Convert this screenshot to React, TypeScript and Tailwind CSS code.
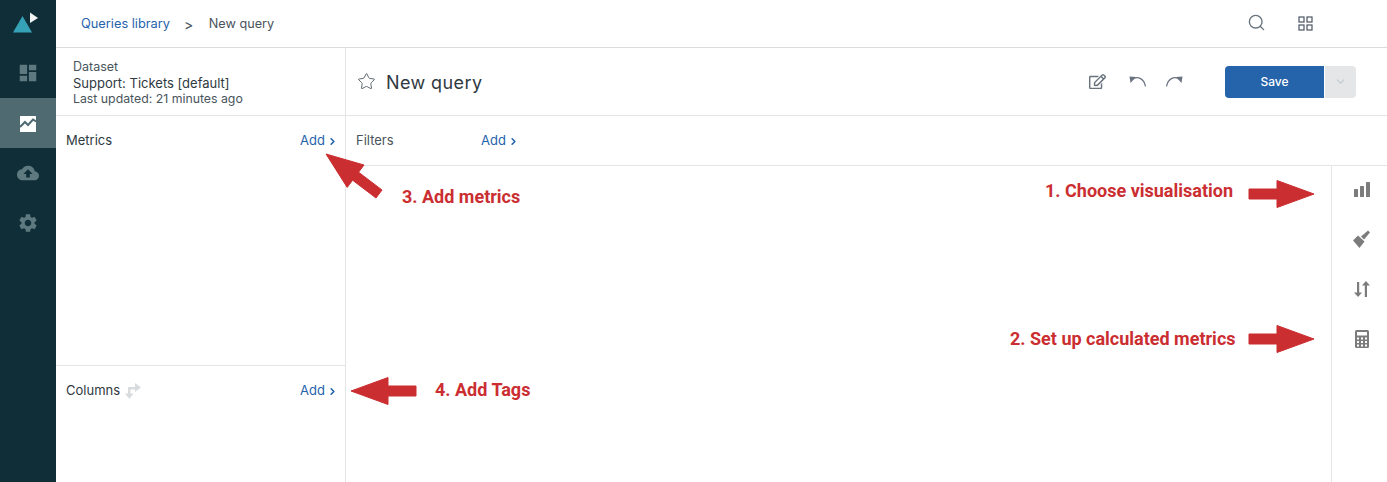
import { FaRegEdit } from "react-icons/fa";
import { MdCloudUpload, MdDashboard, MdSettings } from "react-icons/md";
import { ChevronDown, ChevronRight, Search, Star } from "lucide-react";

function AddLink() {
  return (
    <span className="flex items-center gap-[2px] text-[13px] text-[#2563ab]">
      Add
      <ChevronRight size={11} strokeWidth={3.500} className="mt-px" />
    </span>
  );
}

function Logo() {
  return (
    <svg width="26" height="24" viewBox="0 0 26 24">
      <path d="M9.500 4L19 20.500H0z" fill="#36a2b8" />
      <path d="M17 0.500L25 6L17 11z" fill="#f2f5f5" />
    </svg>
  );
}

function TrendIcon() {
  return (
    <svg width="16" height="16" viewBox="0 0 16 16">
      <rect width="16" height="16" rx="0.500" fill="#fff" />
      <path d="M0 11L5 6L8 9L13 3.500L16 5.500" fill="none" stroke="#4f6b71" strokeWidth="2" />
    </svg>
  );
}

function GridIcon() {
  return (
    <svg width="15" height="15" viewBox="0 0 15 15" fill="none" stroke="#4b5563" strokeWidth="1.200">
      <rect x="1" y="1" width="5" height="5" />
      <rect x="9" y="1" width="5" height="5" />
      <rect x="1" y="9" width="5" height="5" />
      <rect x="9" y="9" width="5" height="5" />
    </svg>
  );
}

function UndoIcon({ flip }: { flip?: boolean }) {
  return (
    <svg width="17" height="11" viewBox="0 0 17 11" className={flip ? "-scale-x-100" : ""}>
      <path d="M4 3C9 0 15 2.500 16.500 10.500" fill="none" stroke="#6b7280" strokeWidth="1.200" />
      <path d="M0.500 0.500L7 1L1.500 7z" fill="#6b7280" />
    </svg>
  );
}

function BarsIcon() {
  return (
    <svg width="16" height="15" viewBox="0 0 16 15" fill="#7c7c7c">
      <rect x="0" y="7" width="4" height="8" rx="0.500" />
      <rect x="6" y="4" width="4" height="11" rx="0.500" />
      <rect x="12" y="0" width="4" height="15" rx="0.500" />
    </svg>
  );
}

function BrushIcon() {
  return (
    <svg width="17" height="18" viewBox="0 0 17 18" fill="#7c7c7c">
      <path d="M15 0.500L17 2.500L11 9.500L8 6.500z" />
      <path d="M5 5.500L11.500 11.500L6.500 18L0 10.500z" />
    </svg>
  );
}

function SortIcon() {
  return (
    <svg width="16" height="16" viewBox="0 0 16 16" fill="#7c7c7c">
      <path d="M3 1H5.200V11.500H8L4.100 16L0 11.500H3z" />
      <path d="M10.800 16H13V4.500H16L11.900 0L8 4.500H10.800z" />
    </svg>
  );
}

function CalculatorIcon() {
  return (
    <svg width="14" height="18" viewBox="0 0 14 18">
      <rect width="14" height="18" rx="1.500" fill="#7c7c7c" />
      <rect x="2" y="2" width="10" height="3.500" fill="#fff" />
      <g fill="#fff">
        <rect x="2" y="7.500" width="2" height="2" />
        <rect x="6" y="7.500" width="2" height="2" />
        <rect x="10" y="7.500" width="2" height="2" />
        <rect x="2" y="11" width="2" height="2" />
        <rect x="6" y="11" width="2" height="2" />
        <rect x="10" y="11" width="2" height="2" />
        <rect x="2" y="14.500" width="2" height="2" />
        <rect x="6" y="14.500" width="2" height="2" />
        <rect x="10" y="14.500" width="2" height="2" />
      </g>
    </svg>
  );
}

function SwapIcon() {
  return (
    <svg width="16" height="16" viewBox="0 0 16 16" fill="#d9dcdf">
      <path d="M3 4H10V6.500H5.500V11H3z" />
      <path d="M10 0L16 4.500L10 9z" />
      <path d="M0 10.500H8.500L4.250 16z" />
    </svg>
  );
}

function ArrowRight({ className }: { className: string }) {
  return (
    <svg width="66" height="28" viewBox="0 0 66 28" className={className}>
      <path d="M1 9H29V0.500L66 14L29 27.500V19H1z" fill="#cb2e31" stroke="#cb2e31" strokeLinejoin="round" />
    </svg>
  );
}

function NavItem({ active, children }: { active?: boolean; children: React.ReactNode }) {
  return (
    <div className={`flex h-[50px] items-center justify-center ${active ? "bg-[#4f6b71]" : ""}`}>
      {children}
    </div>
  );
}

export default function App() {
  return (
    <div className="relative flex h-[482px] w-[1387px] overflow-hidden bg-white font-['Inter',sans-serif] text-[#2f3941]">
      <aside className="flex w-[56px] shrink-0 flex-col bg-[#102e37]">
        <div className="flex h-[48px] items-start pt-3 pl-[13px]">
          <Logo />
        </div>
        <NavItem>
          <MdDashboard size={22} color="#5e7a80" />
        </NavItem>
        <NavItem active>
          <div className="mt-[2px]">
            <TrendIcon />
          </div>
        </NavItem>
        <NavItem>
          <MdCloudUpload size={22} color="#5e7a80" />
        </NavItem>
        <NavItem>
          <MdSettings size={22} color="#5e7a80" />
        </NavItem>
      </aside>

      <div className="flex min-w-0 flex-1 flex-col">
        <header className="flex h-[48px] shrink-0 items-center border-b border-[#d8dcde] pl-[25px]">
          <span className="mt-px text-[12.800px] text-[#2563ab]">Queries library</span>
          <span className="ml-[14px] mt-px text-[14px] text-[#49545c]">&gt;</span>
          <span className="ml-[15.500px] mt-px text-[12.700px] text-[#49545c]">New query</span>
          <div className="ml-auto mr-[74px] flex items-center gap-[32px]">
            <Search size={19} strokeWidth={1.700} color="#68737d" className="-mt-[3px]" />
            <GridIcon />
          </div>
        </header>

        <div className="flex min-h-0 flex-1">
          <section className="flex w-[290px] shrink-0 flex-col border-r border-[#e3e5e6]">
            <div className="flex h-[68px] shrink-0 flex-col justify-center border-b border-[#e3e5e6] pl-[17px] pt-[2px] leading-[16px]">
              <span className="text-[12.500px] text-[#49545c]">Dataset</span>
              <span className="text-[13px] text-[#2f3941]">Support: Tickets [default]</span>
              <span className="text-[12.300px] text-[#49545c]">Last updated: 21 minutes ago</span>
            </div>
            <div className="h-[250px] shrink-0 border-b border-[#e3e5e6] pl-[10px] pr-[7px] pt-[16px]">
              <div className="flex items-center justify-between leading-[17px]">
                <span className="text-[13px]">Metrics</span>
                <AddLink />
              </div>
            </div>
            <div className="flex-1 pl-[10px] pr-[7px] pt-[16px]">
              <div className="flex items-center justify-between leading-[17px]">
                <span className="flex items-center gap-[5px] text-[13px]">
                  Columns
                  <SwapIcon />
                </span>
                <AddLink />
              </div>
            </div>
          </section>

          <main className="flex min-w-0 flex-1 flex-col">
            <div className="flex h-[68px] shrink-0 items-center border-b border-[#e3e5e6] pl-[11px]">
              <Star size={19} strokeWidth={1.100} color="#49545c" />
              <span className="ml-[10px] mt-[2px] text-[18px] tracking-[0.4px] text-[#2f3941]">New query</span>
              <div className="ml-auto flex items-center">
                <FaRegEdit size={17} color="#68737d" />
                <div className="ml-[23px] flex items-center gap-[20px]">
                  <UndoIcon />
                  <UndoIcon flip />
                </div>
                <div className="ml-[42px] mr-[31px] flex h-[32px] overflow-hidden rounded-[4px]">
                  <button className="w-[99px] bg-[#2563ab] text-[12px] font-medium text-white">Save</button>
                  <span className="ml-px flex w-[31px] items-center justify-center bg-[#e4e6e8]">
                    <ChevronDown size={13} color="#c2c8cc" />
                  </span>
                </div>
              </div>
            </div>
            <div className="flex h-[50px] shrink-0 items-center border-b border-[#e3e5e6] pl-[10px]">
              <span className="w-[125px] text-[13px] text-[#49545c]">Filters</span>
              <AddLink />
            </div>
            <div className="flex min-h-0 flex-1 justify-end">
              <div className="flex w-[56px] flex-col items-center gap-[30px] border-l border-[#e3e5e6] pl-[4px] pt-[13px]">
                <div className="flex h-[20px] items-center"><BarsIcon /></div>
                <div className="flex h-[20px] items-center"><BrushIcon /></div>
                <div className="flex h-[20px] items-center"><SortIcon /></div>
                <div className="flex h-[20px] items-center"><CalculatorIcon /></div>
              </div>
            </div>
          </main>
        </div>
      </div>

      <svg width="60" height="48" viewBox="0 0 60 48" className="absolute left-[325px] top-[153px]">
        <path
          d="M1 1L22.200 34.400L27.600 27.200L51 45L57 37L33.600 19.200L39 12z"
          fill="#cb2e31"
          stroke="#cb2e31"
          strokeLinejoin="round"
        />
      </svg>
      <span className="absolute left-[402px] top-[183px] font-['Roboto',sans-serif] text-[18px] font-bold text-[#cb2e31]">
        3. Add metrics
      </span>
      <span className="absolute left-[435px] top-[376px] font-['Roboto',sans-serif] text-[18px] font-bold text-[#cb2e31]">
        4. Add Tags
      </span>
      <ArrowRight className="absolute left-[351px] top-[377px] -scale-x-100" />
      <span className="absolute left-[1045px] top-[177px] font-['Roboto',sans-serif] text-[18px] font-bold text-[#cb2e31]">
        1. Choose visualisation
      </span>
      <ArrowRight className="absolute left-[1248px] top-[180px]" />
      <span className="absolute left-[1010px] top-[325px] font-['Roboto',sans-serif] text-[18px] font-bold text-[#cb2e31]">
        2. Set up calculated metrics
      </span>
      <ArrowRight className="absolute left-[1248px] top-[325px]" />
    </div>
  );
}
